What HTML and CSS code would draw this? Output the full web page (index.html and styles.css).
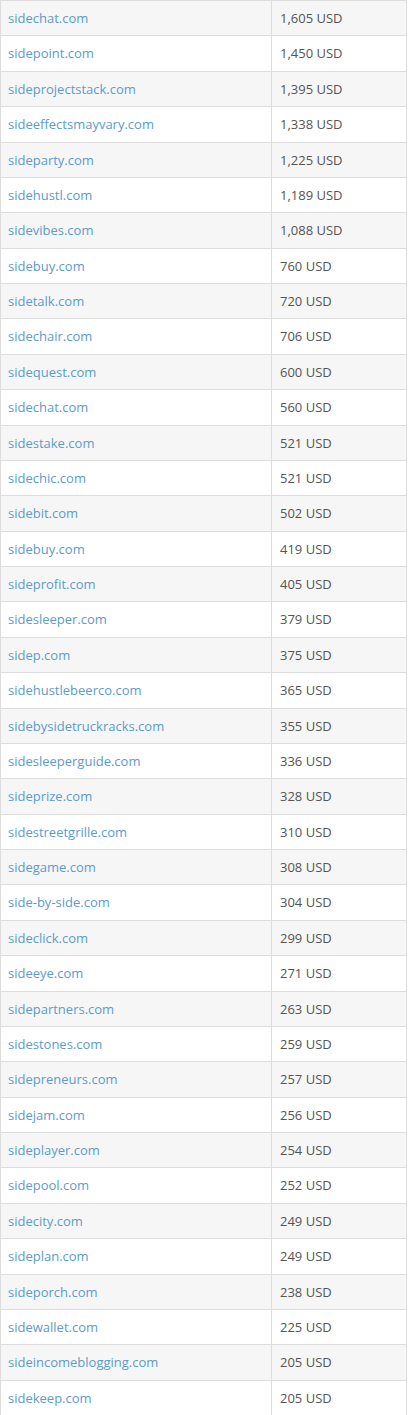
FILE: index.html
```html
<!DOCTYPE html>
<html>
<head>
<meta charset="utf-8">
<link rel="stylesheet" href="styles.css">
</head>
<body>
<table class="domains">
<tbody>
<tr><td class="name"><a href="#">sidechat.com</a></td><td class="price">1,605 USD</td></tr>
<tr><td class="name"><a href="#">sidepoint.com</a></td><td class="price">1,450 USD</td></tr>
<tr><td class="name"><a href="#">sideprojectstack.com</a></td><td class="price">1,395 USD</td></tr>
<tr><td class="name"><a href="#">sideeffectsmayvary.com</a></td><td class="price">1,338 USD</td></tr>
<tr><td class="name"><a href="#">sideparty.com</a></td><td class="price">1,225 USD</td></tr>
<tr><td class="name"><a href="#">sidehustl.com</a></td><td class="price">1,189 USD</td></tr>
<tr><td class="name"><a href="#">sidevibes.com</a></td><td class="price">1,088 USD</td></tr>
<tr><td class="name"><a href="#">sidebuy.com</a></td><td class="price">760 USD</td></tr>
<tr><td class="name"><a href="#">sidetalk.com</a></td><td class="price">720 USD</td></tr>
<tr><td class="name"><a href="#">sidechair.com</a></td><td class="price">706 USD</td></tr>
<tr><td class="name"><a href="#">sidequest.com</a></td><td class="price">600 USD</td></tr>
<tr><td class="name"><a href="#">sidechat.com</a></td><td class="price">560 USD</td></tr>
<tr><td class="name"><a href="#">sidestake.com</a></td><td class="price">521 USD</td></tr>
<tr><td class="name"><a href="#">sidechic.com</a></td><td class="price">521 USD</td></tr>
<tr><td class="name"><a href="#">sidebit.com</a></td><td class="price">502 USD</td></tr>
<tr><td class="name"><a href="#">sidebuy.com</a></td><td class="price">419 USD</td></tr>
<tr><td class="name"><a href="#">sideprofit.com</a></td><td class="price">405 USD</td></tr>
<tr><td class="name"><a href="#">sidesleeper.com</a></td><td class="price">379 USD</td></tr>
<tr><td class="name"><a href="#">sidep.com</a></td><td class="price">375 USD</td></tr>
<tr><td class="name"><a href="#">sidehustlebeerco.com</a></td><td class="price">365 USD</td></tr>
<tr><td class="name"><a href="#">sidebysidetruckracks.com</a></td><td class="price">355 USD</td></tr>
<tr><td class="name"><a href="#">sidesleeperguide.com</a></td><td class="price">336 USD</td></tr>
<tr><td class="name"><a href="#">sideprize.com</a></td><td class="price">328 USD</td></tr>
<tr><td class="name"><a href="#">sidestreetgrille.com</a></td><td class="price">310 USD</td></tr>
<tr><td class="name"><a href="#">sidegame.com</a></td><td class="price">308 USD</td></tr>
<tr><td class="name"><a href="#">side-by-side.com</a></td><td class="price">304 USD</td></tr>
<tr><td class="name"><a href="#">sideclick.com</a></td><td class="price">299 USD</td></tr>
<tr><td class="name"><a href="#">sideeye.com</a></td><td class="price">271 USD</td></tr>
<tr><td class="name"><a href="#">sidepartners.com</a></td><td class="price">263 USD</td></tr>
<tr><td class="name"><a href="#">sidestones.com</a></td><td class="price">259 USD</td></tr>
<tr><td class="name"><a href="#">sidepreneurs.com</a></td><td class="price">257 USD</td></tr>
<tr><td class="name"><a href="#">sidejam.com</a></td><td class="price">256 USD</td></tr>
<tr><td class="name"><a href="#">sideplayer.com</a></td><td class="price">254 USD</td></tr>
<tr><td class="name"><a href="#">sidepool.com</a></td><td class="price">252 USD</td></tr>
<tr><td class="name"><a href="#">sidecity.com</a></td><td class="price">249 USD</td></tr>
<tr><td class="name"><a href="#">sideplan.com</a></td><td class="price">249 USD</td></tr>
<tr><td class="name"><a href="#">sideporch.com</a></td><td class="price">238 USD</td></tr>
<tr><td class="name"><a href="#">sidewallet.com</a></td><td class="price">225 USD</td></tr>
<tr><td class="name"><a href="#">sideincomeblogging.com</a></td><td class="price">205 USD</td></tr>
<tr><td class="name"><a href="#">sidekeep.com</a></td><td class="price">205 USD</td></tr>
</tbody>
</table>
</body>
</html>
```

FILE: styles.css
```css
html, body {
  margin: 0;
  padding: 0;
  background: #ffffff;
}

body {
  font-family: "Open Sans", "Liberation Sans", sans-serif;
  font-size: 13px;
  color: #555555;
}

.domains {
  width: 407px;
  border-collapse: collapse;
  border-spacing: 0;
  table-layout: fixed;
}

.domains td {
  border: 1px solid #dddddd;
  padding: 8px;
  line-height: 18.375px;
  height: 18.375px;
  vertical-align: middle;
  white-space: nowrap;
}

.domains td.name {
  width: 255px;
  padding-left: 7px;
}

.domains tr:nth-child(odd) td {
  background: #f6f6f6;
}

.domains a {
  color: #5b9bd2;
  text-decoration: none;
}

.price {
  color: #555555;
}
```
